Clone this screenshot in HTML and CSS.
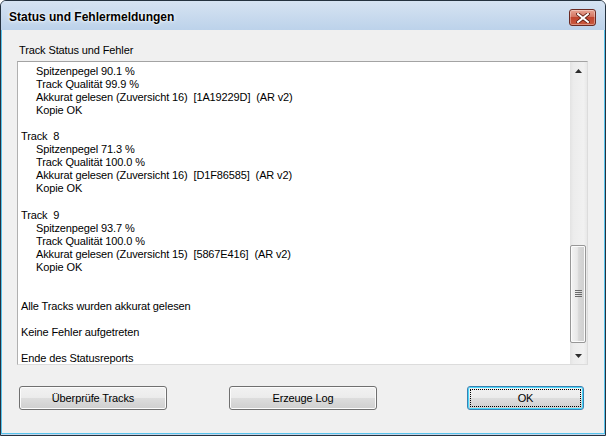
FILE: index.html
```html
<!DOCTYPE html>
<html>
<head>
<meta charset="utf-8">
<link rel="stylesheet" href="styles.css">
</head>
<body>
<div class="window">
  <div class="titlebar">
    <span class="title">Status und Fehlermeldungen</span>
    <span class="close">
      <svg width="14" height="10" viewBox="0 0 14 10"><path d="M2 1 L12 9 M12 1 L2 9" stroke="#5a1a10" stroke-width="3.6" stroke-linecap="square"/><path d="M2 1 L12 9 M12 1 L2 9" stroke="#fff" stroke-width="2" stroke-linecap="square"/></svg>
    </span>
  </div>
  <div class="client">
    <div class="label">Track Status und Fehler</div>
    <div class="textbox">
      <div class="lines">
        <div class="ln in">Spitzenpegel 90.1 %</div>
        <div class="ln in">Track Qualität 99.9 %</div>
        <div class="ln in">Akkurat gelesen (Zuversicht 16)&nbsp; [1A19229D]&nbsp; (AR v2)</div>
        <div class="ln in">Kopie OK</div>
        <div class="ln"></div>
        <div class="ln">Track&nbsp; 8</div>
        <div class="ln in">Spitzenpegel 71.3 %</div>
        <div class="ln in">Track Qualität 100.0 %</div>
        <div class="ln in">Akkurat gelesen (Zuversicht 16)&nbsp; [D1F86585]&nbsp; (AR v2)</div>
        <div class="ln in">Kopie OK</div>
        <div class="ln"></div>
        <div class="ln">Track&nbsp; 9</div>
        <div class="ln in">Spitzenpegel 93.7 %</div>
        <div class="ln in">Track Qualität 100.0 %</div>
        <div class="ln in">Akkurat gelesen (Zuversicht 15)&nbsp; [5867E416]&nbsp; (AR v2)</div>
        <div class="ln in">Kopie OK</div>
        <div class="ln"></div>
        <div class="ln"></div>
        <div class="ln">Alle Tracks wurden akkurat gelesen</div>
        <div class="ln"></div>
        <div class="ln">Keine Fehler aufgetreten</div>
        <div class="ln"></div>
        <div class="ln">Ende des Statusreports</div>
      </div>
      <div class="scrollbar">
        <div class="arrow">
          <svg width="7" height="4" viewBox="0 0 7 4"><path d="M3.5 0 L7 4 L0 4 Z" fill="#2c2c2c"/></svg>
        </div>
        <div class="track">
          <div class="upper"></div>
          <div class="thumb">
            <svg width="7" height="8" viewBox="0 0 7 8"><path d="M0 0.5H7M0 2.5H7M0 4.5H7M0 6.5H7" stroke="#6a6a6a" stroke-width="1"/></svg>
          </div>
          <div class="lower"></div>
        </div>
        <div class="arrow">
          <svg width="7" height="4" viewBox="0 0 7 4"><path d="M0 0 L7 0 L3.5 4 Z" fill="#2c2c2c"/></svg>
        </div>
      </div>
    </div>
    <div class="buttons">
      <div class="btn b1">Überprüfe Tracks</div>
      <div class="btn b2">Erzeuge Log</div>
      <div class="btn ok"><span class="focus">OK</span></div>
    </div>
  </div>
</div>
</body>
</html>
```
FILE: styles.css
```css
html, body {
  margin: 0;
  padding: 0;
  background: #ffffff;
}
.window {
  width: 606px;
  height: 436px;
  box-sizing: border-box;
  border: 1px solid #25323f;
  border-radius: 6px 6px 0 0;
  display: flex;
  flex-direction: column;
  background: #c3d6ec;
  overflow: hidden;
  font-family: "Liberation Sans", Arial, sans-serif;
  font-size: 11px;
  letter-spacing: -0.12px;
  color: #000;
}
.titlebar {
  height: 29px;
  flex: none;
  display: flex;
  align-items: center;
  justify-content: space-between;
  padding: 0 9px 0 8px;
  background: linear-gradient(#d6e3f2, #bcd2ea);
}
.title {
  font-family: "Liberation Sans", Arial, sans-serif;
  font-weight: bold;
  font-size: 12px;
  letter-spacing: 0;
  color: #000;
  text-shadow: 0 0 4px #fff, 0 0 2px #fff;
  padding-top: 3px;
}
.close {
  width: 25px;
  height: 15px;
  border: 1px solid #6b2a22;
  border-radius: 3px;
  background: linear-gradient(#e8a493 0%, #d47562 45%, #c0452f 50%, #c95a3f 100%);
  display: flex;
  align-items: center;
  justify-content: center;
  margin-top: 4px;
  box-shadow: inset 0 0 0 1px rgba(255,255,255,0.35);
}
.client {
  flex: 1;
  background: #f0f0f0;
  border: 1px solid #58c3ec;
  border-top: none;
  margin: 0 0 1px 0;
  padding: 14px 16px 0 15px;
  display: flex;
  flex-direction: column;
}
.label {
  height: 13px;
  line-height: 13px;
  padding-left: 2px;
  margin-bottom: 4px;
}
.textbox {
  height: 304px;
  box-sizing: border-box;
  background: #fff;
  border: 1px solid #dcdcdc;
  border-top-color: #a3a3a3;
  border-left-color: #b0b0b0;
  display: flex;
}
.lines {
  flex: 1;
  padding: 3px 0 0 3px;
}
.ln {
  height: 13.05px;
  line-height: 13px;
  white-space: nowrap;
}
.ln.in {
  padding-left: 15px;
}
.scrollbar {
  width: 17px;
  display: flex;
  flex-direction: column;
  background: linear-gradient(90deg, #e3e3e3, #ececec 20%, #f1f1f1 80%, #e8e8e8);
}
.arrow {
  height: 17px;
  display: flex;
  align-items: center;
  justify-content: center;
}
.track {
  flex: 1;
  display: flex;
  flex-direction: column;
  padding: 0 1px 0 0;
}
.upper {
  height: 166px;
}
.thumb {
  height: 98px;
  box-sizing: border-box;
  border: 1px solid #979797;
  border-radius: 2px;
  background: linear-gradient(90deg, #f4f4f4, #e8e8e8 45%, #d8d8d8 55%, #cfcfcf);
  box-shadow: inset 0 0 0 1px #fbfbfb;
  display: flex;
  align-items: center;
  justify-content: center;
}
.lower {
  flex: 1;
}
.buttons {
  display: flex;
  margin-top: 21px;
  padding-left: 2px;
}
.btn {
  height: 24px;
  box-sizing: border-box;
  border: 1px solid #707070;
  border-radius: 3px;
  background: linear-gradient(#f2f2f2 0%, #ebebeb 50%, #dddddd 51%, #cfcfcf 100%);
  box-shadow: inset 0 0 0 1px #fcfcfc;
  display: flex;
  align-items: center;
  justify-content: center;
}
.b1 { width: 148px; }
.b2 { width: 148px; margin-left: 62px; }
.ok {
  width: 117px;
  margin-left: 90px;
  border-color: #3c7fb1;
  box-shadow: inset 0 0 0 1px #48d8fb;
  padding: 2px;
}
.focus {
  flex: 1;
  align-self: stretch;
  border: 1px dotted #000;
  display: flex;
  align-items: center;
  justify-content: center;
}
```
